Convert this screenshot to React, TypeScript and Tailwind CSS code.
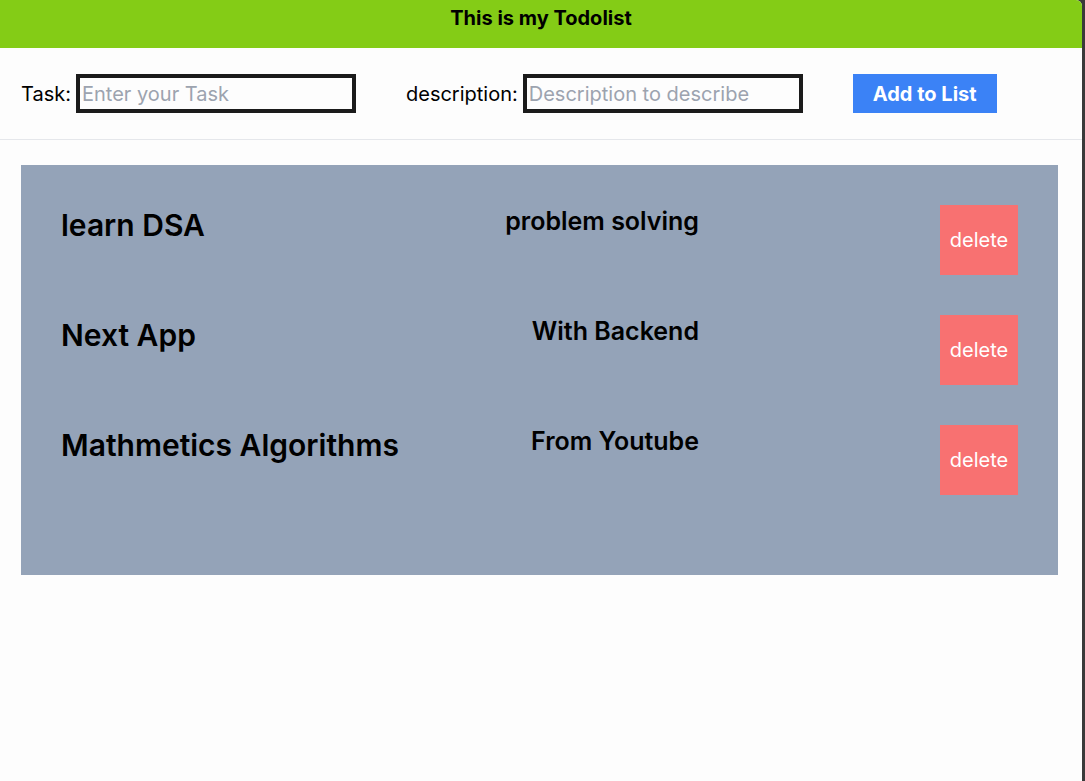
const todos = [
  { title: "learn DSA", desc: "problem solving" },
  { title: "Next App", desc: "With Backend" },
  { title: "Mathmetics Algorithms", desc: "From Youtube" },
];

export default function App() {
  return (
    <div className="min-h-screen flex bg-[#3a3a3a] font-['Inter',sans-serif] text-black">
      <main className="flex-1 mr-[3px] bg-[#fdfdfd] rounded-tr-md overflow-hidden">
        <header className="h-12 bg-[#84cc16] pt-1 text-center text-xl leading-7 font-bold">
          This is my Todolist
        </header>

        <div className="h-[92px] flex items-center pl-[21px] gap-[50px] border-b border-gray-200 text-xl">
          <label className="flex items-center gap-[5px]">
            Task:
            <input
              className="w-[280px] h-[39px] border-4 border-[#1b1b1b] px-0.5 outline-none placeholder:text-[#9ca3af]"
              placeholder="Enter your Task"
            />
          </label>
          <label className="flex items-center gap-[5px]">
            description:
            <input
              className="w-[280px] h-[39px] border-4 border-[#1b1b1b] px-0.5 outline-none placeholder:text-[#9ca3af]"
              placeholder="Description to describe"
            />
          </label>
          <button className="h-[39px] px-5 bg-[#3b82f6] text-white font-bold">Add to List</button>
        </div>

        <div className="mt-[25px] ml-[21px] mr-[24px] bg-[#94a3b8] p-10">
          {todos.map((t) => (
            <div key={t.title} className="grid grid-cols-3 mb-10">
              <h5 className="text-3xl leading-9 font-semibold pt-0.5 whitespace-nowrap">{t.title}</h5>
              <h6 className="text-[25px] leading-8 font-semibold text-right">{t.desc}</h6>
              <div className="flex justify-end">
                <button className="w-[78px] h-[70px] bg-[#f87171] text-white text-xl">delete</button>
              </div>
            </div>
          ))}
        </div>
      </main>
    </div>
  );
}
